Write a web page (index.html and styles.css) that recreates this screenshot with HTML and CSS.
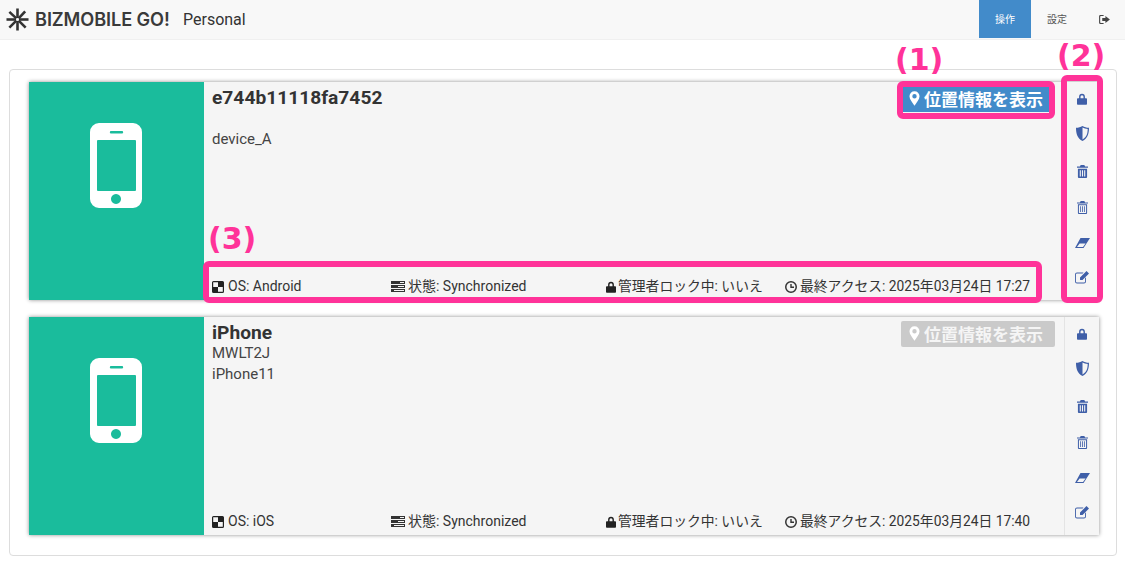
FILE: index.html
```html
<!DOCTYPE html>
<html lang="ja">
<head>
<meta charset="utf-8">
<title>BIZMOBILE GO!</title>
<link rel="stylesheet" href="styles.css">
</head>
<body>
<svg class="defs" width="0" height="0" aria-hidden="true">
  <symbol id="i-phone" viewBox="0 0 52 85">
    <path fill-rule="evenodd" d="M9 0H43A9 9 0 0 1 52 9V76A9 9 0 0 1 43 85H9A9 9 0 0 1 0 76V9A9 9 0 0 1 9 0ZM21 8a1 1 0 0 0 0 2.400H32a1 1 0 0 0 0-2.400ZM8 17a1 1 0 0 0-1 1V67a1 1 0 0 0 1 1H45a1 1 0 0 0 1-1V18a1 1 0 0 0-1-1ZM26 71a5 5 0 1 0 .01 0Z"/>
  </symbol>
  <symbol id="i-marker" viewBox="0 0 12 16">
    <path fill-rule="evenodd" d="M6 0A5.500 5.500 0 0 0 .5 5.500C.5 9 4 12.500 6 16 8 12.500 11.500 9 11.500 5.500A5.500 5.500 0 0 0 6 0ZM6 3.200A2.400 2.400 0 1 1 6 8 2.400 2.400 0 0 1 6 3.200Z"/>
  </symbol>
  <symbol id="i-lock" viewBox="0 0 12 14">
    <path fill-rule="evenodd" d="M2.500 6V4.200A3.500 3.500 0 0 1 9.500 4.200V6H11A1 1 0 0 1 12 7V13A1 1 0 0 1 11 14H1A1 1 0 0 1 0 13V7A1 1 0 0 1 1 6ZM4.200 6H7.800V4.200A1.800 1.800 0 0 0 4.200 4.200Z"/>
  </symbol>
  <symbol id="i-shield" viewBox="0 0 13 15">
    <path fill-rule="evenodd" d="M6.500 0C4.500 1.200 2.500 1.800 0 1.800 0 8 1.500 12.500 6.500 15 11.500 12.500 13 8 13 1.800 10.500 1.800 8.500 1.200 6.500 0ZM6.500 1.600C8 2.500 9.800 3 11.700 3.100 11.600 8 10.400 11.500 6.500 13.500Z"/>
  </symbol>
  <symbol id="i-trash" viewBox="0 0 12 14">
    <path fill-rule="evenodd" d="M4 0H8L8.800 1.500H12V3H0V1.500H3.200ZM1 4H11V13A1 1 0 0 1 10 14H2A1 1 0 0 1 1 13ZM3 5.500V12.500H4.200V5.500ZM5.400 5.500V12.500H6.600V5.500ZM7.800 5.500V12.500H9V5.500Z"/>
  </symbol>
  <symbol id="i-trash-o" viewBox="0 0 12 14">
    <path fill-rule="evenodd" d="M4 0H8L8.800 1.500H12V2.700H0V1.500H3.200ZM1 3.400H11V13A1 1 0 0 1 10 14H2A1 1 0 0 1 1 13ZM2.100 4.500V12.900H9.900V4.500ZM3.500 5.500H4.400V12H3.500ZM5.550 5.500H6.450V12H5.550ZM7.600 5.500H8.500V12H7.600Z"/>
  </symbol>
  <symbol id="i-eraser" viewBox="0 0 15 10">
    <path fill-rule="evenodd" d="M5.500 0H15L9.500 8.500 8.500 10H0ZM4.600 5.400 2 9H8L10.600 5.400Z"/>
  </symbol>
  <symbol id="i-edit" viewBox="0 0 14 13">
    <path fill-rule="evenodd" d="M2 1.500H8.500L7.600 2.400H2A1.100 1.100 0 0 0 .9 3.500V10.500A1.100 1.100 0 0 0 2 11.600H9A1.100 1.100 0 0 0 10.100 10.500V7.200L11 6.300V10.500A2 2 0 0 1 9 12.500H2A2 2 0 0 1 0 10.500V3.500A2 2 0 0 1 2 1.500ZM11.500 0 14 2.500 7.500 9H5V6.500Z"/>
  </symbol>
  <symbol id="i-os" viewBox="0 0 12 12">
    <path fill-rule="evenodd" d="M1.500 0H10.500A1.500 1.500 0 0 1 12 1.500V10.500A1.500 1.500 0 0 1 10.500 12H1.500A1.500 1.500 0 0 1 0 10.500V1.500A1.500 1.500 0 0 1 1.500 0ZM1.200 1.200V5.900H6V1.200ZM6 5.900V10.800H10.800V5.900Z"/>
  </symbol>
  <symbol id="i-server" viewBox="0 0 14 11">
    <path fill-rule="evenodd" d="M0 0H14V3H0ZM9 1V2H13V1ZM0 4H14V7H0ZM7 5V6H13V5ZM0 8H14V11H0ZM3 9V10H13V9Z"/>
  </symbol>
  <symbol id="i-clock" viewBox="0 0 12 12">
    <path fill-rule="evenodd" d="M6 0A6 6 0 1 1 6 12 6 6 0 0 1 6 0ZM6 1.500A4.500 4.500 0 1 0 6 10.500 4.500 4.500 0 0 0 6 1.500ZM5.300 3H6.700V5.500H9V7H5.300Z"/>
  </symbol>
  <symbol id="i-logout" viewBox="0 0 12 10">
    <path fill-rule="evenodd" d="M1.500 0H5V1.200H2A.8.8 0 0 0 1.200 2V8A.8.8 0 0 0 2 8.800H5V10H1.500A1.500 1.500 0 0 1 0 8.500V1.500A1.500 1.500 0 0 1 1.500 0ZM7 1 12 5 7 9V6.800H3.500V3.200H7Z"/>
  </symbol>
</svg>

<header class="navbar">
  <div class="brand">
    <svg class="logo" viewBox="0 0 24 24" aria-hidden="true">
      <g stroke="#333" stroke-width="2.700" stroke-linecap="butt">
        <path d="M12 .5V10.500"/><path d="M12 13.500V23.500"/><path d="M.5 12H10.500"/><path d="M13.500 12H23.500"/>
        <path d="M3.500 4 10.800 10.800"/><path d="M20 3.500 13.200 10.800"/><path d="M3.500 20.500 10.800 13.200"/><path d="M20.500 20.500 13.200 13.200"/>
      </g>
    </svg>
    <span class="brand-name">BIZMOBILE GO!</span>
    <span class="brand-sub">Personal</span>
  </div>
  <nav class="tabs">
    <a class="tab tab-active">操作</a>
    <a class="tab">設定</a>
    <a class="tab tab-icon"><svg class="ic-logout"><use href="#i-logout"/></svg></a>
  </nav>
</header>

<main class="panel">
  <section class="card">
    <div class="card-thumb"><svg class="phone"><use href="#i-phone"/></svg></div>
    <div class="card-body">
      <div class="card-head">
        <div class="card-text">
          <h2 class="card-title">e744b11118fa7452</h2>
          <p class="line">&nbsp;</p>
          <p class="line">device_A</p>
        </div>
        <button class="loc loc-on"><svg class="ic-marker"><use href="#i-marker"/></svg>位置情報を表示</button>
      </div>
      <div class="meta">
        <span class="m m1"><svg class="ic-os"><use href="#i-os"/></svg>OS: Android</span>
        <span class="m m2"><svg class="ic-server"><use href="#i-server"/></svg>状態: Synchronized</span>
        <span class="m m3"><svg class="ic-lock"><use href="#i-lock"/></svg>管理者ロック中: いいえ</span>
        <span class="m m4"><svg class="ic-clock"><use href="#i-clock"/></svg>最終アクセス: 2025年03月24日 17:27</span>
      </div>
    </div>
    <div class="side">
      <svg class="s s-lock"><use href="#i-lock"/></svg>
      <svg class="s s-shield"><use href="#i-shield"/></svg>
      <svg class="s s-trash"><use href="#i-trash"/></svg>
      <svg class="s s-trasho"><use href="#i-trash-o"/></svg>
      <svg class="s s-eraser"><use href="#i-eraser"/></svg>
      <svg class="s s-edit"><use href="#i-edit"/></svg>
    </div>
  </section>

  <section class="card">
    <div class="card-thumb"><svg class="phone"><use href="#i-phone"/></svg></div>
    <div class="card-body">
      <div class="card-head">
        <div class="card-text">
          <h2 class="card-title">iPhone</h2>
          <p class="line">MWLT2J</p>
          <p class="line">iPhone11</p>
        </div>
        <button class="loc loc-off"><svg class="ic-marker"><use href="#i-marker"/></svg>位置情報を表示</button>
      </div>
      <div class="meta">
        <span class="m m1"><svg class="ic-os"><use href="#i-os"/></svg>OS: iOS</span>
        <span class="m m2"><svg class="ic-server"><use href="#i-server"/></svg>状態: Synchronized</span>
        <span class="m m3"><svg class="ic-lock"><use href="#i-lock"/></svg>管理者ロック中: いいえ</span>
        <span class="m m4"><svg class="ic-clock"><use href="#i-clock"/></svg>最終アクセス: 2025年03月24日 17:40</span>
      </div>
    </div>
    <div class="side">
      <svg class="s s-lock"><use href="#i-lock"/></svg>
      <svg class="s s-shield"><use href="#i-shield"/></svg>
      <svg class="s s-trash"><use href="#i-trash"/></svg>
      <svg class="s s-trasho"><use href="#i-trash-o"/></svg>
      <svg class="s s-eraser"><use href="#i-eraser"/></svg>
      <svg class="s s-edit"><use href="#i-edit"/></svg>
    </div>
  </section>
</main>

<div class="note note-1"></div>
<div class="note note-2"></div>
<div class="note note-3"></div>
<span class="label label-1">(1)</span>
<span class="label label-2">(2)</span>
<span class="label label-3">(3)</span>
</body>
</html>
```

FILE: styles.css
```css
* { box-sizing: border-box; }
html, body { margin: 0; padding: 0; }
body {
  width: 1125px;
  height: 565px;
  overflow: hidden;
  position: relative;
  background: #fff;
  color: #333;
  font-family: Roboto, "Noto Sans CJK JP", sans-serif;
  font-size: 14px;
  line-height: 21px;
}
.defs { position: absolute; }

.navbar {
  height: 40px;
  background: #f8f8f8;
  border-bottom: 1px solid #f0f0f0;
  display: flex;
  justify-content: space-between;
  padding: 0 0 0 6px;
}
.brand { display: flex; align-items: center; height: 38px; }
.logo { width: 23px; height: 23px; margin-right: 6px; }
.brand-name {
  font-family: Inter, sans-serif;
  font-weight: 600;
  font-size: 18.200px;
  letter-spacing: -.1px;
  color: #3a3a3a;
  width: 148px;
  white-space: nowrap;
}
.brand-sub { font-size: 16px; color: #333; }
.tabs { display: flex; height: 38px; padding-right: 0; }
.tab {
  width: 52px;
  display: flex;
  align-items: center;
  justify-content: center;
  font-size: 10px;
  color: #555;
}
.tab-active { background: #428bca; color: #fff; }
.tab-icon { width: 42px; }
.ic-logout { width: 11px; height: 9px; fill: #444; }

.panel {
  margin: 29px 8px 0 9px;
  height: 487px;
  border: 1px solid #ddd;
  border-radius: 4px;
  padding: 12px 17px 0 19px;
  display: flex;
  flex-direction: column;
  gap: 17px;
}
.card {
  height: 218px;
  display: flex;
  background: #f5f5f5;
  box-shadow: 0 0 4px rgba(0,0,0,.45);
}
.card-thumb {
  width: 175px;
  flex: none;
  background: #1abc9c;
  display: flex;
  align-items: flex-start;
  justify-content: center;
  padding: 41px 1px 0 0;
}
.phone { width: 52px; height: 85px; fill: #fff; }
.card-body {
  flex: 1;
  display: flex;
  flex-direction: column;
  padding: 5px 9px 3px 8px;
  min-width: 0;
}
.card-head { flex: 1; display: flex; justify-content: space-between; align-items: flex-start; }
.card-title { margin: 0; font-size: 19.200px; font-weight: 700; line-height: 21px; color: #333; }
.line { margin: 0; font-size: 15px; line-height: 21px; color: #444; }
.loc {
  width: 154px;
  height: 26px;
  border: 0;
  border-radius: 2px;
  margin: -1px 0 0;
  padding: 0 4px 2px 0;
  color: #fff;
  font-family: "Noto Sans CJK JP", sans-serif;
  font-size: 17px;
  font-weight: 700;
  display: flex;
  align-items: center;
  justify-content: center;
  gap: 4px;
}
.ic-marker { width: 11px; height: 15px; fill: #fff; }
.loc-on { background: #428bca; }
.loc-off { background: #cacaca; color: #f5f5f5; }
.meta { display: flex; align-items: center; height: 21px; color: #333; font-size: 13.800px; white-space: nowrap; }
.m { display: flex; align-items: center; gap: 3px; flex: none; }
.m1 { width: 179px; gap: 4px; font-size: 14px; }
.m2 { width: 215px; font-size: 14px; }
.m3 { width: 179px; gap: 2px; }
.ic-os { width: 12px; height: 12px; fill: #222; }
.ic-server { width: 14px; height: 11px; fill: #333; }
.ic-lock { width: 10px; height: 12px; fill: #222; }
.ic-clock { width: 12px; height: 12px; fill: #333; }

.side {
  width: 35px;
  flex: none;
  border-left: 1px solid #e4e4e4;
  display: flex;
  flex-direction: column;
  align-items: center;
  padding-top: 11px;
}
.s { fill: #3f5fa8; flex: none; display: block; }
.s-lock { width: 10px; height: 12px; }
.s-shield { width: 13px; height: 15px; margin-top: 21px; }
.s-trash { width: 11px; height: 13px; margin-top: 24px; }
.s-trasho { width: 11px; height: 13px; margin-top: 23px; }
.s-eraser { width: 15px; height: 10px; margin-top: 24px; }
.s-edit { width: 14px; height: 13px; margin-top: 23px; }

.note {
  position: absolute;
  border: 6px solid #ff3399;
  border-radius: 6px;
}
.note-1 { left: 897px; top: 81px; width: 158px; height: 38px; }
.note-2 { left: 1061px; top: 75px; width: 42px; height: 228px; }
.note-3 { left: 203px; top: 261px; width: 839px; height: 42px; }
.label {
  position: absolute;
  color: #ff3399;
  font-family: "DejaVu Sans", sans-serif;
  font-weight: 700;
  font-size: 30px;
  line-height: 34px;
}
.label-1 { left: 895px; top: 43px; }
.label-2 { left: 1057px; top: 39px; }
.label-3 { left: 208px; top: 222px; }
```
